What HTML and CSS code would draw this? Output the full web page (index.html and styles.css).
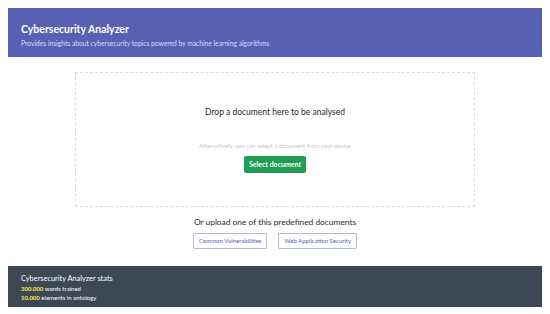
FILE: index.html
```html
<!DOCTYPE html>
<html lang="en">

<head>
    <meta charset="UTF-8">
    <meta name="viewport" content="width=device-width, initial-scale=1.0">
    <title>Cybersecurity Analyzer</title>
    <link rel="stylesheet" href="styles.css">
</head>

<body>
    <div class="header">
        <h1>Cybersecurity Analyzer</h1>
        <p>Provides insights about cybersecurity topics powered by machine learning algorithms</p>
    </div>

    <div class="content">
        <div class="dropzone">
            <h2>Drop a document here to be analysed</h2>
            <p class="alt">Alternatively, you can select a document from your device</p>
            <a href="javascript:;" class="select-btn">Select document</a>
        </div>

        <div class="predefined">
            <h3>Or upload one of this predefined documents</h3>
            <div class="predefined-list">
                <a href="javascript:;" class="doc-btn">Common Vulnerabilities</a>
                <a href="javascript:;" class="doc-btn">Web Application Security</a>
            </div>
        </div>
    </div>

    <div class="footer">
        <h4>Cybersecurity Analyzer stats</h4>
        <p><b>300.000</b> words trained</p>
        <p><b>10.000</b> elements in ontology</p>
    </div>
</body>

</html>
```

FILE: styles.css
```css
* {
    margin: 0;
    padding: 0;
    box-sizing: border-box;
}

body {
    margin: 8px;
    font-family: Lato, "Noto Sans", sans-serif;
    background-color: white;
    color: #3d4852;
}

.header {
    height: 49px;
    background-color: #5661b3;
    color: white;
    padding: 14px 13px 0;
}

.header h1 {
    font-size: 10.5px;
    font-weight: 700;
    line-height: 15px;
}

.header p {
    margin-top: 1px;
    font-size: 6.7px;
    line-height: 10px;
    color: #d9ddf5;
}

.content {
    display: flex;
    flex-direction: column;
    align-items: center;
    padding-top: 15px;
}

.dropzone {
    width: 400px;
    height: 135px;
    border: 1px dashed #dcdcdc;
    display: flex;
    flex-direction: column;
    align-items: center;
    padding-top: 32px;
}

.dropzone h2 {
    font-size: 8.5px;
    font-weight: 400;
    line-height: 14px;
    color: #22292f;
}

.alt {
    margin-top: 23px;
    font-size: 6px;
    line-height: 8px;
    color: #c3c6cc;
}

.select-btn {
    display: block;
    margin-top: 6px;
    width: 62px;
    height: 17px;
    line-height: 17px;
    text-align: center;
    background-color: #1f9d55;
    color: white;
    font-size: 7px;
    font-weight: 700;
    text-decoration: none;
    border-radius: 2px;
}

.predefined {
    margin-top: 8px;
    display: flex;
    flex-direction: column;
    align-items: center;
}

.predefined h3 {
    font-size: 8.4px;
    font-weight: 400;
    line-height: 14px;
    color: #22292f;
}

.predefined-list {
    display: flex;
    gap: 11px;
    margin-top: 4px;
}

.doc-btn {
    display: block;
    height: 16px;
    line-height: 14px;
    padding: 0 5px;
    border: 1px solid #b3b8e0;
    border-radius: 1px;
    font-size: 6px;
    color: #5661b3;
    text-decoration: none;
}

.footer {
    margin-top: 17px;
    height: 41px;
    background-color: #3d4852;
    color: white;
    padding: 7px 13px 0;
}

.footer h4 {
    font-size: 7.4px;
    font-weight: 400;
    line-height: 11px;
}

.footer p {
    font-size: 6px;
    line-height: 9px;
}

.footer b {
    color: #ffed4a;
}
```
